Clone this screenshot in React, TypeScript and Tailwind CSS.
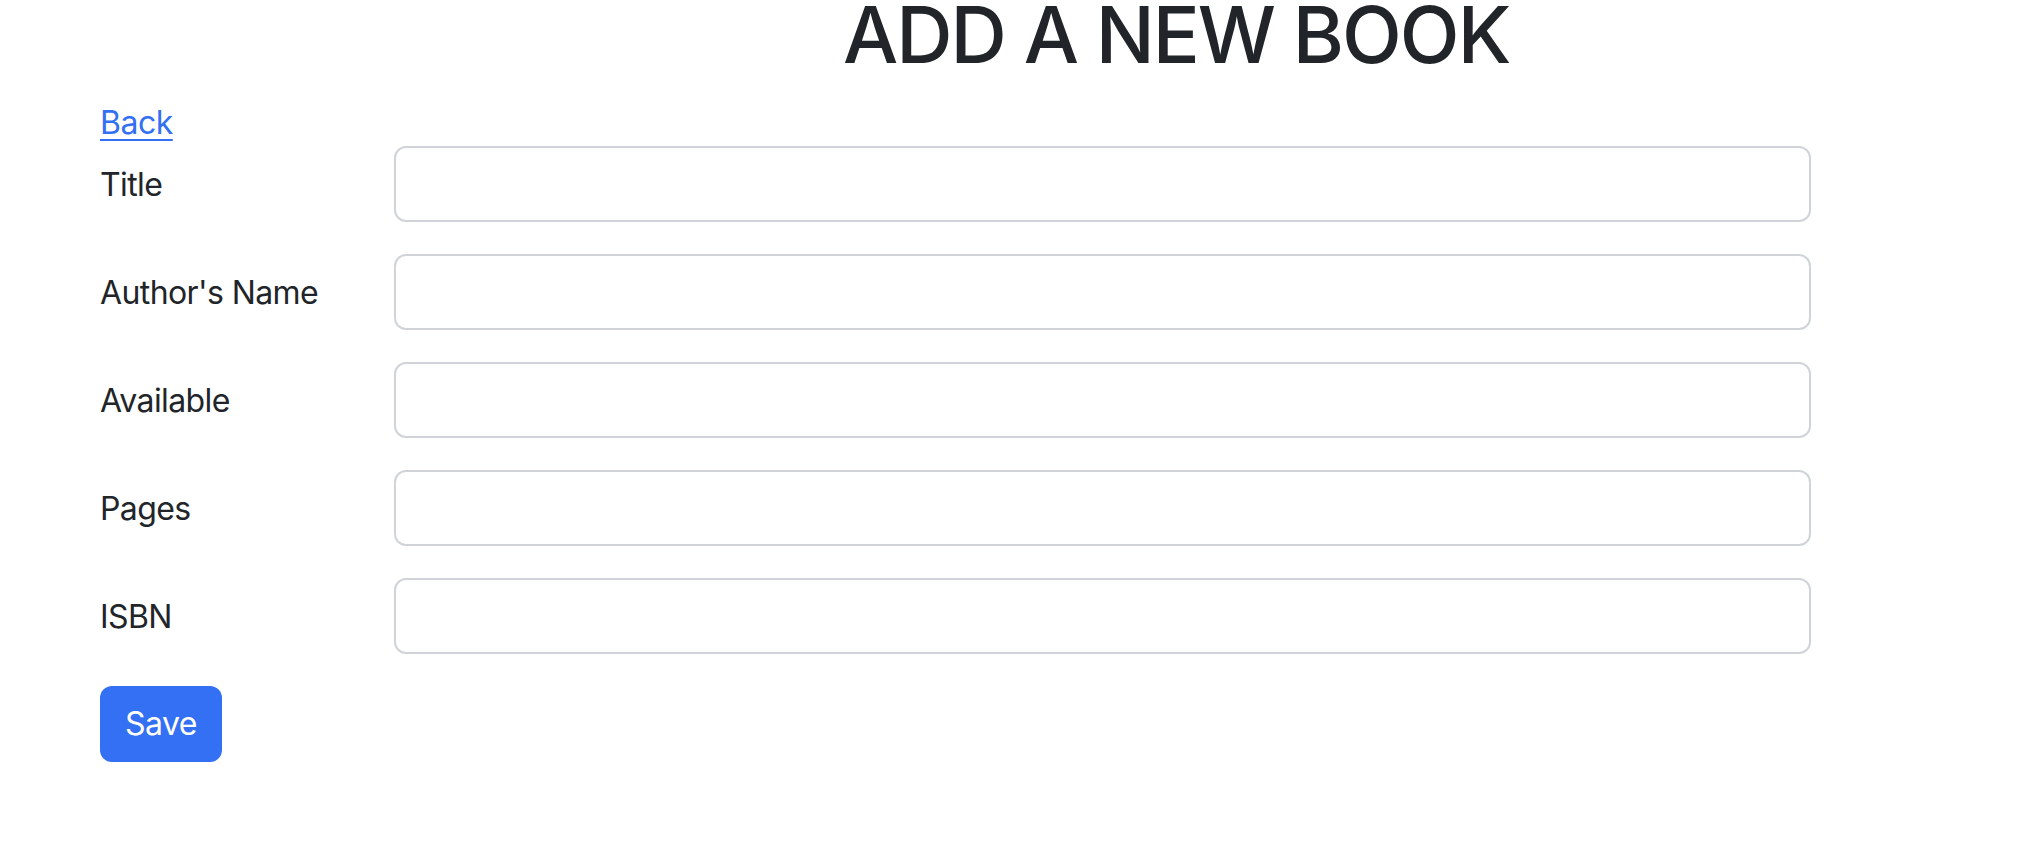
import React from 'react';

const fields = ['Title', "Author's Name", 'Available', 'Pages', 'ISBN'];

const App = () => {
  return (
    <div className="min-h-screen bg-white text-[#212529] font-['Inter','Liberation_Sans',sans-serif]">
      <div className="pl-[100px]">
        <h1 className="ml-[743px] w-max text-[78px] leading-[70px] font-medium tracking-[-2px]">ADD A NEW BOOK</h1>

        <a href="#" className="mt-[29px] inline-block text-[32px] leading-[47px] tracking-[-0.5px] text-[#3370f4] underline underline-offset-[5px] decoration-2">
          Back
        </a>

        <form>
          {fields.map((f) => (
            <div key={f} className="flex items-center mb-[32px]">
              <label className="w-[294px] pt-[2px] text-[32px] leading-[48px] tracking-[-0.6px]">{f}</label>
              <input
                type="text"
                className="w-[1417px] h-[76px] rounded-[12px] border-2 border-[#d0d4d9] bg-white px-6 text-[32px] outline-none"
              />
            </div>
          ))}
          <button
            type="button"
            className="w-[122px] h-[76px] rounded-[12px] bg-[#3370f4] text-white text-[32px] tracking-[-0.5px]"
          >
            Save
          </button>
        </form>
      </div>
    </div>
  );
};

export default App;
